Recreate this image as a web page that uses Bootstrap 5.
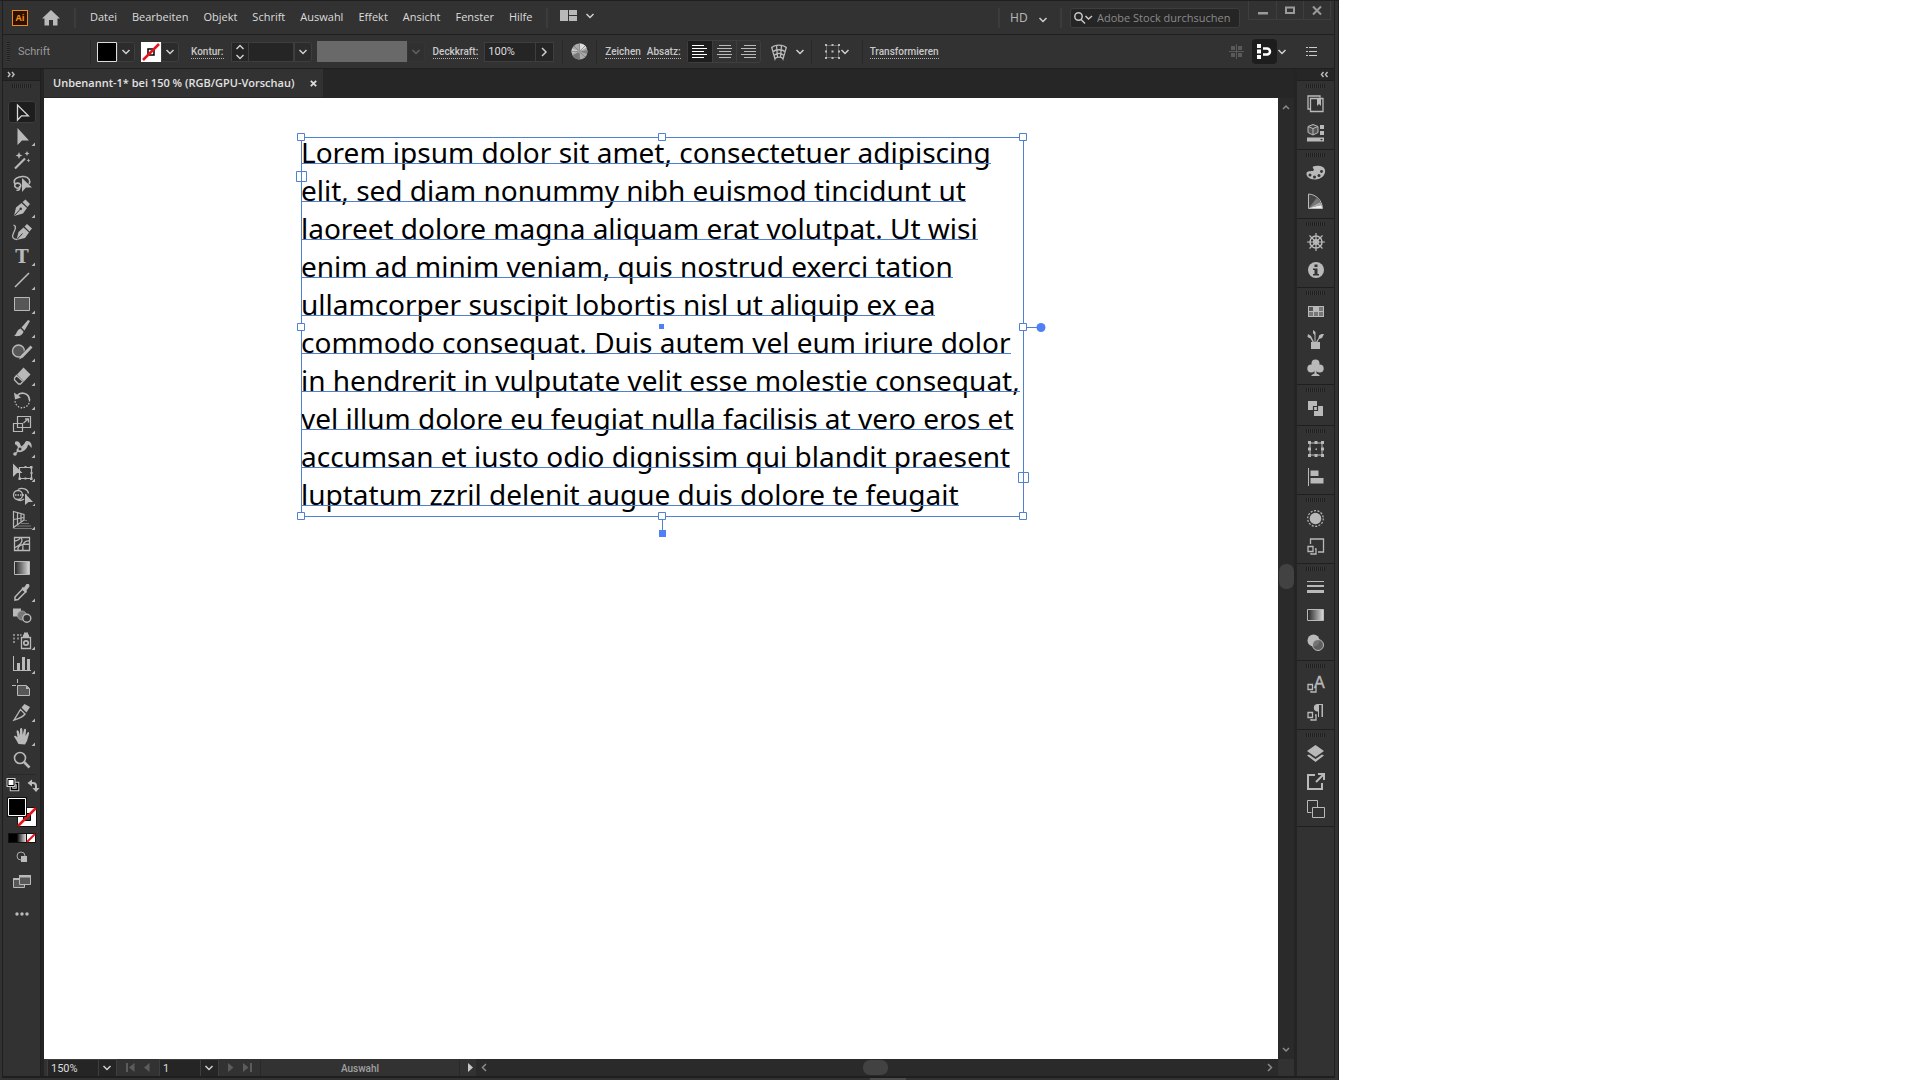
<!DOCTYPE html>
<html lang="de">
<head>
<meta charset="utf-8">
<meta name="viewport" content="width=device-width, initial-scale=1">
<title>Unbenannt-1* bei 150 %</title>
<link href="https://cdn.jsdelivr.net/npm/bootstrap@5.3.0/dist/css/bootstrap.min.css" rel="stylesheet">
<script src="https://cdn.jsdelivr.net/npm/bootstrap@5.3.0/dist/js/bootstrap.bundle.min.js" defer></script>
<style>
:root{--panel:#323232;--dark:#262626;--field:#252525;--edge:#1f1f1f;--rim:#3e3e3e;--ink:#b9b9b9;--text:#dcdcdc;--blue:#5080d0;
--chev:url("data:image/svg+xml,%3Csvg xmlns='http://www.w3.org/2000/svg' viewBox='0 0 10 6'%3E%3Cpath d='M1.5 1 5 4.5 8.5 1' fill='none' stroke='%23d0d0d0' stroke-width='1.5'/%3E%3C/svg%3E")}
body{background:#fff;font-family:"Noto Sans","Open Sans",sans-serif;font-size:11px;line-height:16px;color:var(--text)}
button{background:none;border:0;padding:0;color:inherit}
svg{display:block;flex:none;overflow:visible}
.app{width:69.74vw;min-height:100vh;background:var(--panel);border-top:1px solid var(--edge);border-right:1px solid var(--edge)}
.inner{margin:0 3px 0 2px;border:1px solid var(--edge);border-top:0;border-bottom-width:2px}
.taskmark{width:36px;height:2px;background:#4c4c4c;margin-left:65%}
/* menu bar */
.menubar{height:33px;padding-left:9px}
.logo{width:16px;height:16px;border:1px solid #f08a1c;background:#2b1100;color:#f08a1c;font:bold 9px/14px "Open Sans",sans-serif;text-align:center}
.home{margin-left:14px}
.vsep{width:2px;height:20px;background:#3c3c3c;flex:none}
.menus{gap:15px;margin:0 0 2px 14px;font-family:"Open Sans","Noto Sans",sans-serif}
.menus a{color:var(--text);text-decoration:none;font-size:11px;white-space:nowrap}
.hd{color:#b4b4b4;font-size:12px;width:41px;background:transparent var(--chev) no-repeat right 3px top 7px/10px 6px;border:0;appearance:none;padding:0;margin:0 9px 0 10px}
.stock{width:170px;height:20px;background:var(--field);border:1px solid var(--rim);border-radius:3px;padding:0 3px}
.stock input{background:none;border:0;outline:0;color:#999;width:100%;padding:0;font:11px/16px "Open Sans",sans-serif}
.stock input::placeholder{color:#8a8a8a;opacity:1}
.winbtns{border:1px solid var(--rim);border-top:0;height:19px;margin:0 3px 0 8px}
.winbtns button{width:27px;height:18px;display:flex;align-items:center;justify-content:center}
.winbtns button+button{border-left:1px solid var(--rim)}
/* control bar */
.controls{height:35px;border-top:1px solid var(--edge);border-bottom:1px solid var(--edge);font-family:Roboto,sans-serif;font-size:10px}
.grip-v{width:3px;height:20px;background:repeating-linear-gradient(#1f1f1f 0 1px,#3a3a3a 1px 2px)}
.grip-h{width:19px;height:4px;background:repeating-linear-gradient(90deg,#1f1f1f 0 1px,#3a3a3a 1px 2px)}
.csep{width:1px;height:24px;background:#292929;flex:none}
.ctx{width:72px;color:#999;font-size:11px}
.lbl{font-weight:500;color:#c8c8c8;text-decoration:none;border-bottom:1px dotted #b0b0b0;line-height:13px;white-space:nowrap}
.swbtn{width:20px;height:20px;margin-left:6px}
.drop{width:18px;height:20px;border:1px solid var(--rim);background:#2c2c2c var(--chev) no-repeat center/10px 6px;border-radius:0 3px 3px 0}
.drop.off{opacity:.3}
.profile{width:90px;height:21px;background:#696969;margin-left:5px}
.fld{height:20px;background:var(--field);border:1px solid var(--rim);color:var(--text);outline:0;padding:0 3px;font:11px/16px Roboto,sans-serif;border-radius:0}
.aligns{border:1px solid var(--rim);border-radius:3px;height:23px}
.aligns button{width:24px;height:21px;display:flex;align-items:center;justify-content:center}
.aligns button+button{border-left:1px solid var(--rim)}
.on{background:#1d1d1d}
.snap{width:25px;height:25px}
.chevbtn{width:10px;height:14px;background:var(--chev) no-repeat center/10px 6px}
/* work area */
.dockhead{height:12px;background:var(--dark);border-bottom:1px solid var(--edge)}
.tools{width:38px;border-right:1px solid var(--edge);flex:none}
.gutter{width:3px;background:#242424;flex:none}
.tool{width:28px;height:24px;flex:none}
.tool.sel{background:#1d1d1d;box-shadow:inset 0 0 0 1px #3d3d3d;border-radius:3px;height:22px;margin:1px 0}
.tool.sel svg{margin-top:-1px}
.tabs{height:29px;background:var(--dark)}
.doctab{height:28px;width:279px;background:var(--panel);padding:0 6px 0 9px;color:#e2e2e2;font:600 11px/28px "Open Sans","Noto Sans",sans-serif;white-space:nowrap}
.canvas{background:#fff}
.sb{width:16px;background:#2a2a2a;flex:none}
.thumb{background:#424242;border-radius:7px}
.thumb-v{width:15px;height:25px;margin-bottom:5px}
.thumb-h{width:25px;height:15px;margin-right:3px}
.status{height:17px;background:var(--panel)}
.status select{appearance:none;height:17px;border:1px solid var(--rim);border-bottom:0;padding:0 3px;color:var(--text);font:11px/17px Roboto,sans-serif;
background:var(--chev) no-repeat right 4px center/10px 6px,linear-gradient(var(--rim),var(--rim)) no-repeat right 17px top/1px 100%,var(--field)}
.status>button{margin-left:9px}
.zoomsel{width:70px;margin-left:3px}
.pagesel{width:60px;margin-left:9px}
.toolname{width:200px;margin-left:8px;border:solid #292929;border-width:0 1px;color:#a0a0a0;font:500 10px/19px Roboto,sans-serif}
.hbar{background:#2a2a2a;margin-left:2px}
.dock{width:37px;background:var(--panel);flex:none}
.pgroup{border-bottom:1px solid var(--edge);padding:3px 0 3px}
.pgroup .grip-h{margin-bottom:2px}
.pgroup button{width:28px;height:28px;display:flex;align-items:center;justify-content:center}
/* text frame on the artboard */
.tframe{position:absolute;left:257px;top:39px;width:722px;height:380px;color:#000;font-family:"Noto Sans",sans-serif;font-size:28px;line-height:38px}
.ln{display:block;width:fit-content;height:38px;position:relative;white-space:nowrap;top:-4px}
.ln::after{content:"";position:absolute;left:0;right:0;bottom:7px;height:1px;background:var(--blue)}
.tframe svg{position:absolute;left:0;top:0}
</style>
</head>
<body>
<div class="app d-flex flex-column">
<div class="inner d-flex flex-column flex-grow-1">

<header class="menubar d-flex align-items-center">
  <div class="logo">Ai</div>
  <button class="home" aria-label="Startseite"><svg width="18" height="16" viewBox="0 0 18 16"><path d="M9 0 18 8.500H15.500V15.500H11V10H7V15.500H2.500V8.500H0Z" fill="#b9b9b9"/></svg></button>
  <span class="vsep home"></span>
  <nav class="menus d-flex">
    <a href="#">Datei</a><a href="#">Bearbeiten</a><a href="#">Objekt</a><a href="#">Schrift</a><a href="#">Auswahl</a><a href="#">Effekt</a><a href="#">Ansicht</a><a href="#">Fenster</a><a href="#">Hilfe</a>
  </nav>
  <span class="vsep home me-2"></span>
  <button class="d-flex align-items-center gap-2 ps-1 mb-1" aria-label="Arbeitsbereich"><svg width="17" height="11" viewBox="0 0 17 11" fill="#b9b9b9"><path d="M0 0h8v11H0zM9 0h8v5H9zM9 6h8v5H9z"/></svg><span class="chevbtn"></span></button>
  <div class="ms-auto d-flex align-items-center align-self-stretch">
    <span class="vsep"></span>
    <select class="hd" aria-label="Dokumenttyp"><option>HD</option></select>
    <span class="vsep me-2"></span>
    <label class="stock d-flex align-items-center"><svg class="me-1" width="19" height="12" viewBox="0 0 19 12" fill="none" stroke="#c8c8c8" stroke-width="1.500"><circle cx="4.500" cy="4.500" r="3.700"/><path d="M7 7.500 11 11.500M11.500 4 14.500 7 18 4"/></svg><input type="text" placeholder="Adobe Stock durchsuchen" aria-label="Adobe Stock durchsuchen"></label>
    <div class="winbtns d-flex align-self-start">
      <button aria-label="Minimieren"><svg width="10" height="10"><path d="M0 7h10v2.500H0z" fill="#9a9a9a"/></svg></button><button aria-label="Maximieren"><svg width="10" height="8"><path d="M1 1.500h8v5.500H1z" fill="none" stroke="#9a9a9a" stroke-width="2"/></svg></button><button aria-label="Schließen"><svg width="10" height="9"><path d="M1 .5 9 8.500M9 .5 1 8.500" stroke="#9a9a9a" stroke-width="2"/></svg></button>
    </div>
  </div>
</header>

<div class="controls d-flex align-items-center">
  <span class="grip-v ms-1"></span>
  <span class="ctx ms-2">Schrift</span>
  <span class="csep"></span>
  <button class="swbtn" aria-label="Fläche"><svg width="20" height="20"><path d="M.5.500h19v19H.5z" fill="#000" stroke="#ddd"/></svg></button><button class="drop" aria-label="Flächenfarbe"></button>
  <button class="swbtn" aria-label="Kontur"><svg width="20" height="20"><path d="M0 0h20v20H0z" fill="#fff"/><path d="M7 7h6v6H7z" fill="none" stroke="#000" stroke-width="1.500"/><path d="M2 18 18 2" stroke="#e3141c" stroke-width="2.500"/></svg></button><button class="drop" aria-label="Konturfarbe"></button>
  <a class="lbl" href="#" style="margin:0 7px 0 12px">Kontur:</a>
  <button class="fld" style="width:18px" aria-label="Stärke"><svg width="10" height="16" fill="none" stroke="#ccc" stroke-width="1.500"><path d="M1.500 5 5 1.500 8.500 5M1.500 11 5 14.500 8.500 11"/></svg></button><input class="fld border-start-0" style="width:45px" aria-label="Konturstärke"><button class="drop" aria-label="Stärke wählen"></button>
  <span class="profile"></span><button class="drop off" aria-label="Profil" disabled></button>
  <a class="lbl" href="#" style="margin:0 6px 0 8px">Deckkraft:</a>
  <input class="fld" style="width:52px" value="100%" aria-label="Deckkraft"><button class="fld border-start-0" style="width:18px" aria-label="Deckkraft ändern"><svg width="10" height="10" fill="none" stroke="#ccc" stroke-width="1.500"><path d="M3 1 7 5 3 9"/></svg></button>
  <span class="csep ms-2 me-2"></span>
  <button aria-label="Bildmaterial neu färben"><svg width="17" height="17" viewBox="0 0 17 17"><circle cx="8.500" cy="8.500" r="8" fill="#aaa"/><path d="M8.500 8.500V.5A8 8 0 0 1 15.500 4.500Z" fill="#ddd"/><path d="M8.500 8.500 1.500 12.500A8 8 0 0 0 8.500 16.500Z" fill="#777"/><path d="M8.500 8.500 1 5.500A8 8 0 0 0 .8 10Z" fill="#ccc"/><path d="M8.500 8.500 16 11A8 8 0 0 0 16.500 7Z" fill="#888"/><path d="M8.500.5v16M.5 8.500h16M3 3l11 11M14 3 3 14" stroke="#777" stroke-width=".7"/><circle cx="8.500" cy="8.500" r="2" fill="#999"/></svg></button>
  <span class="csep ms-2 me-2"></span>
  <a class="lbl" href="#">Zeichen</a><a class="lbl" href="#" style="margin:0 6px">Absatz:</a>
  <div class="aligns d-flex">
    <button class="on" aria-label="Linksbündig"><svg width="15" height="14" stroke="#fff"><path d="M0 .5h12M0 3.500h15M0 6.500h12M0 9.500h15M0 12.500h12"/></svg></button><button aria-label="Zentriert"><svg width="15" height="14" stroke="#bbb"><path d="M2 .5h12M0 3.500h15M2 6.500h12M0 9.500h15M2 12.500h12"/></svg></button><button aria-label="Rechtsbündig"><svg width="15" height="14" stroke="#bbb"><path d="M3 .5h12M0 3.500h15M3 6.500h12M0 9.500h15M3 12.500h12"/></svg></button>
  </div>
  <button class="d-flex align-items-center gap-2" style="margin-left:10px" aria-label="Verzerrungshülle"><svg width="16" height="16" viewBox="0 0 16 16" fill="none" stroke="#bbb" stroke-width="1.300"><path d="M.7 3.500C4 .2 12 .2 15.300 3.500L12 15C11 12.500 5 12.500 4 15ZM1.500 8C5 5 11 5 14.500 8M3 11.500C6 9 10 9 13 11.500M5.500 1.500 6.500 13M10.500 1.500 9.500 13"/></svg><span class="chevbtn"></span></button>
  <span class="csep" style="margin:0 13px 0 6px"></span>
  <button class="d-flex align-items-center" aria-label="Ausrichten"><svg width="15" height="15" fill="#bbb"><path d="M1.500 1.500h12v12h-12z" fill="none" stroke="#999" stroke-dasharray="1 1"/><path d="M0 0h2v2H0zM6.500 0h2v2h-2zM13 0h2v2h-2zM0 6.500h2v2H0zM13 6.500h2v2h-2zM0 13h2v2H0zM6.500 13h2v2h-2zM13 13h2v2h-2zM6.500 6.500h2v2h-2z"/></svg><span class="chevbtn"></span></button>
  <span class="csep" style="margin:0 7px 0 12px"></span>
  <a class="lbl" href="#">Transformieren</a>
  <div class="ms-auto d-flex align-items-center">
    <button aria-label="Am Pixelraster ausrichten"><svg width="15" height="16" fill="#5a5a5a"><path d="M2 2h4v4H2zM9 2h4v4H9zM2 9h4v4H2zM9 9h4v4H9zM7 0h1v15H7zM0 7h15v1H0z"/></svg></button>
    <button class="on snap rounded-1 d-flex align-items-center justify-content-center ms-2" aria-label="An Pixel ausrichten"><svg width="15" height="15" fill="#fff"><path d="M0 0h4v4H0zM0 5.500h4v4H0zM0 11h4v4H0z"/><path d="M6 4.500h4a3 3 0 0 1 0 6H6" fill="none" stroke="#fff" stroke-width="2.500"/></svg></button>
    <span class="chevbtn"></span>
    <button style="margin:0 17px 0 19px" aria-label="Menü"><svg width="11" height="9" fill="#ccc"><path d="M0 0h2v1H0zM3 0h8v1H3zM0 4h2v1H0zM3 4h8v1H3zM0 8h2v1H0zM3 8h8v1H3z"/></svg></button>
  </div>
</div>

<main class="d-flex flex-grow-1">
  <!-- tool bar -->
  <aside class="tools d-flex flex-column align-items-center">
    <div class="dockhead w-100"><svg width="18" height="11"><path d="M5 3l2 2.500L5 8M9 3l2 2.500L9 8" fill="none" stroke="#bbb" stroke-width="1.500"/></svg></div>
    <span class="grip-h" style="margin:3px 0 12px"></span>
    <button class="tool sel" aria-label="Auswahl"><svg width="28" height="24" fill="none" stroke="#d8d8d8" stroke-width="1.300"><path d="M9.500 5V20L13.500 15.800H20.300Z"/></svg></button>
    <button class="tool" aria-label="Direktauswahl"><svg width="28" height="24" fill="#b9b9b9"><path d="M9.500 4V21L14 16.500H21ZM27 18.500V22H23.500Z"/></svg></button>
    <button class="tool" aria-label="Zauberstab"><svg width="28" height="24" fill="#b9b9b9"><path d="M7 20.500 17 10.500" stroke="#b9b9b9" stroke-width="2.200"/><path d="M11 4l1 2.500 2.500 1L12 8.500 11 11 10 8.500 7.500 7.500 10 6.500ZM19 3l.8 1.700 1.700.8-1.700.8L19 8l-.8-1.700-1.700-.8 1.700-.8ZM20.500 10.500l.6 1.400 1.400.6-1.400.6-.6 1.400-.6-1.400-1.400-.6 1.400-.6Z"/></svg></button>
    <button class="tool" aria-label="Lasso"><svg width="28" height="24"><path d="M7 12C4 7 11 4 16 4.500 21 5 23 9 21 12M7 12.500A3 2.500 0 1 0 12 12 3 2.500 0 0 0 7 12.500M11.500 14C12.500 17 11 19 8.500 18" fill="none" stroke="#b9b9b9" stroke-width="1.600"/><path d="M14 6V20L18 15.500H24Z" fill="#b9b9b9"/></svg></button>
    <button class="tool" aria-label="Zeichenstift"><svg width="28" height="24" fill="#b9b9b9"><path d="M6 20 8 11.500 13.500 7 19 12 15 17.500ZM14.500 6 17.500 3.500 22 8 19.500 11ZM27 18.500V22H23.500Z"/><path d="M6.500 19.500 12.500 13" stroke="#323232"/><circle cx="12.800" cy="12.800" r="1.200" fill="#323232"/></svg></button>
    <button class="tool" aria-label="Kurvenzeichner"><svg width="28" height="24" fill="#b9b9b9"><path d="M8.500 20 10.500 12 15.500 7.500 21 12.500 17 18ZM16.500 6.500 19 4 24 8.500 21.500 11.500Z"/><path d="M9 19.500 14.500 13.500" stroke="#323232"/><path d="M5.500 5C9 6 7 10 5.500 13 3.500 17 5 19.500 9 19.500" fill="none" stroke="#b9b9b9" stroke-width="1.300"/></svg></button>
    <button class="tool" aria-label="Text"><svg width="28" height="24" fill="#b9b9b9"><text x="14" y="18.500" text-anchor="middle" font-family="DejaVu Serif,serif" font-weight="bold" font-size="18">T</text><path d="M27 18.500V22H23.500Z"/></svg></button>
    <button class="tool" aria-label="Liniensegment"><svg width="28" height="24" fill="#b9b9b9"><path d="M7 19 21 5" stroke="#b9b9b9" stroke-width="1.600"/><path d="M27 18.500V22H23.500Z"/></svg></button>
    <button class="tool" aria-label="Rechteck"><svg width="28" height="24" fill="#b9b9b9"><path d="M6.500 5.500h15v13h-15z" fill="#575757" stroke="#b9b9b9"/><path d="M27 18.500V22H23.500Z"/></svg></button>
    <button class="tool" aria-label="Pinsel"><svg width="28" height="24" fill="#b9b9b9"><path d="M20 4 22 5 16.500 14.500 13.500 11.500ZM12.500 12.500 15.500 15.500C14.500 20 10 20.500 6 20 9 18 8.500 14 12.500 12.500ZM27 18.500V22H23.500Z"/></svg></button>
    <button class="tool" aria-label="Shaper"><svg width="28" height="24" fill="#b9b9b9"><circle cx="10.500" cy="11" r="6" fill="#575757" stroke="#b9b9b9" stroke-width="1.400"/><path d="M13.500 17.500 23.500 7" stroke="#323232" stroke-width="5"/><path d="M11 19.500 12.500 15.500 22.500 5.500 24.500 7.500 15 17.500ZM27 18.500V22H23.500Z"/></svg></button>
    <button class="tool" aria-label="Radiergummi"><svg width="28" height="24" fill="#b9b9b9"><path d="M9 10.500 15.500 3.500 22.500 10.500 16 17.500Z"/><path d="M8.500 11.500 15 17.500 12.500 20 10.500 20 6.500 16 6.500 14Z" fill="#323232" stroke="#b9b9b9" stroke-width="1.300"/><path d="M27 18.500V22H23.500Z"/></svg></button>
    <button class="tool" aria-label="Drehen"><svg width="28" height="24" fill="#b9b9b9"><path d="M9 8C13 3 21 5 21.500 12" fill="none" stroke="#b9b9b9" stroke-width="1.800"/><path d="M21.500 12A7 7 0 0 1 7 13" fill="none" stroke="#b9b9b9" stroke-width="1.300" stroke-dasharray="1.500 1.500"/><path d="M6 4.500 7 11.500 13 9.500ZM27 18.500V22H23.500Z"/></svg></button>
    <button class="tool" aria-label="Skalieren"><svg width="28" height="24" fill="#b9b9b9"><path d="M9.500 4.500h13v11h-13zM5.500 11.500h9v8h-9z" fill="none" stroke="#b9b9b9" stroke-width="1.200"/><path d="M15.500 11 19.500 7.500M17 7h3.500v3.500" fill="none" stroke="#b9b9b9" stroke-width="1.300"/><path d="M27 18.500V22H23.500Z"/></svg></button>
    <button class="tool" aria-label="Breite"><svg width="28" height="24" fill="#b9b9b9"><path d="M7 6C9 4 12 6 12.500 9L14 11C17 11 16 6 18.500 5 22 4.500 24.500 8 23.500 12 22 11 21.500 8 20 9 19 13 15 17 10 16L8 14C11 13 10 9 7 8.500Z"/><path d="M7 18 19 6" stroke="#b9b9b9" stroke-width="1.300"/><circle cx="7" cy="18" r="1.800"/><circle cx="12" cy="13" r="2" fill="#323232" stroke="#b9b9b9"/><path d="M27 18.500V22H23.500Z"/></svg></button>
    <button class="tool" aria-label="Frei transformieren"><svg width="28" height="24" fill="#b9b9b9"><path d="M11.500 7.500h12v11h-12z" fill="none" stroke="#b9b9b9" stroke-width="1.200"/><path d="M5 3.500V17L9 13H14.500ZM10.500 17.500h2.500v2.500h-2.500zM22 6h2.500v2.500H22zM22 17.500h2.500v2.500H22zM16.500 6h2v2h-2zM16.500 17.500h2v2h-2zM22.500 12h2v2h-2zM27 18.500V22H23.500Z"/></svg></button>
    <button class="tool" aria-label="Formerstellung"><svg width="28" height="24" fill="#b9b9b9"><g fill="none" stroke="#b9b9b9" stroke-width="1.300"><circle cx="10" cy="11" r="4.500"/><path d="M10 5.500C14 3 20 5 20.500 9.500"/><path d="M7 11h12" stroke-dasharray="1.500 1"/><path d="M9 15.500C12 17.500 14 16.500 16 15"/></g><path d="M17 9.500V21L20.500 18H25ZM27 19.500V22H24.500Z"/></svg></button>
    <button class="tool" aria-label="Perspektivenraster"><svg width="28" height="24" fill="#b9b9b9"><path d="M5.500 3.500V19.500L16 12V6.500ZM9.500 4.500V17M13 5.500V14.500M5.500 11.500 16 9.500" fill="none" stroke="#b9b9b9" stroke-width="1.200"/><path d="M16 12.500h3M13 15.500h8M9 18h14M6 20.500h18" stroke="#777"/><path d="M27 18.500V22H23.500Z"/></svg></button>
    <button class="tool" aria-label="Gitter"><svg width="28" height="24" fill="none" stroke="#b9b9b9" stroke-width="1.300"><path d="M6.500 5.500h15v13h-15zM6.500 9C10 9 12 7 12 5.500M6.500 16C11 14 16 10 13 5.500M10 18.500C9 13 15 12 21.500 12M15 18.500C14 11 17 8 21.500 9"/></svg></button>
    <button class="tool" aria-label="Verlauf"><svg width="28" height="24"><defs><linearGradient id="g"><stop stop-color="#222"/><stop offset="1" stop-color="#ddd"/></linearGradient></defs><path d="M6.500 5.500h15v13h-15z" fill="url(#g)" stroke="#b9b9b9"/></svg></button>
    <button class="tool" aria-label="Pipette"><svg width="28" height="24" fill="#b9b9b9"><path d="M7 20 7 17 14.500 9 17.500 12 10 19.500Z" fill="none" stroke="#b9b9b9" stroke-width="1.500"/><path d="M13.500 8 15 7 16 7.500 18.500 4 21 4 21.500 6.500 18.500 10.500 19 12 17.500 13ZM27 18.500V22H23.500Z"/></svg></button>
    <button class="tool" aria-label="Angleichen"><svg width="28" height="24"><path d="M5 4.500h8v8H5z" fill="#b9b9b9"/><circle cx="14" cy="11.500" r="4.500" fill="#777" stroke="#999"/><circle cx="18.800" cy="14.200" r="4" fill="#323232" stroke="#b9b9b9" stroke-width="1.400"/></svg></button>
    <button class="tool" aria-label="Symbol aufsprühen"><svg width="28" height="24" fill="#b9b9b9"><path d="M13.500 9.500h9v11h-9z" fill="none" stroke="#b9b9b9" stroke-width="1.300"/><circle cx="18" cy="15" r="2.200" fill="none" stroke="#b9b9b9" stroke-width="1.700"/><path d="M15 6.500h1V4.500h4v2h1V9h-6zM27 18.500V22H23.500Z"/><path d="M5 6h2v2H5zM9 6h2v2H9zM12 6h1.500v2H12zM5 9.500h2v2H5zM9 9.500h2v2H9zM5 13h2v2H5z" fill="#888"/></svg></button>
    <button class="tool" aria-label="Diagramm"><svg width="28" height="24" fill="#b9b9b9"><path d="M5 4h1v14h17v1H5zM9 11h3v7H9zM14 5h3v13h-3zM19 7h3v11h-3zM27 18.500V22H23.500Z"/></svg></button>
    <button class="tool" aria-label="Zeichenfläche"><svg width="28" height="24"><path d="M9.500 9.500h9l3 3v7h-12z" fill="#575757" stroke="#b9b9b9"/><path d="M18 9.500v3.500h3.500z" fill="#b9b9b9"/><path d="M9.500 3v4M4 9.500h4" stroke="#b9b9b9"/></svg></button>
    <button class="tool" aria-label="Slice"><svg width="28" height="24" fill="#b9b9b9"><path d="M6 20 12.500 9.500 17 14C14 18 9 19 6 20Z" fill="none" stroke="#b9b9b9" stroke-width="1.400"/><path d="M13.500 7.500 16.500 4 22 7 18.500 12.500ZM27 18.500V22H23.500Z"/></svg></button>
    <button class="tool" aria-label="Hand"><svg width="28" height="24" fill="#b9b9b9"><path d="M10.500 20C9 17 7.500 14.500 6 12.500 6.500 11 8 11.500 9.500 13.500L8.500 7C9.500 5.500 10.500 6.500 11 8L12 11.500 12 5C13 3.500 14.200 4 14.300 5.500L14.700 11 16 5.500C17 4.200 18.200 5 18 6.500L17.500 12 19.500 8.500C20.500 7.500 21.500 8.500 21 10L19 17 17 20.500ZM27 18.500V22H23.500Z"/></svg></button>
    <button class="tool" aria-label="Zoom"><svg width="28" height="24" fill="none" stroke="#b9b9b9"><circle cx="12" cy="10" r="5.500" stroke-width="1.600"/><path d="M16 14 21.500 19.500" stroke-width="2.600"/></svg></button>
    <svg width="38" height="150" viewBox="3 772 38 150" role="img" aria-label="Fläche und Kontur">
      <path d="M8 774.500h28" stroke="#292929"/>
      <path d="M11.500 783.500h6v6h-6z" fill="none" stroke="#ccc" stroke-width="3.500"/><path d="M11.500 783.500h6v6h-6z" fill="none" stroke="#000" stroke-width="1.500"/><path d="M8 779.500h6v6H8z" fill="#fff" stroke="#ccc" stroke-width="3"/><path d="M8 779.500h6v6H8z" fill="#fff" stroke="#000"/>
      <path d="M30 783h3q3 0 3 3v3" fill="none" stroke="#bbb" stroke-width="2"/><path d="M27.500 783 32 779.500V786.500ZM32.500 788h7L36 792Z" fill="#bbb"/>
      <path d="M17.500 807.500h19v19h-19z" fill="#fff" stroke="#111"/><path d="M23.500 813.500h7v7h-7z" fill="#444" stroke="#000"/><path d="M18 826 36 808" stroke="#e3141c" stroke-width="2.500"/>
      <path d="M7.500 797.500h19v19h-19z" fill="#000" stroke="#111"/><path d="M8.500 798.500h17v17h-17z" fill="#000" stroke="#fff"/>
      <path d="M8 833h28v10H8z" fill="#111"/><path d="M9 834h8v8H9z" fill="#000"/><path d="M18 834h8v8h-8z" fill="url(#g)"/><path d="M27 834h8v8h-8z" fill="#fff"/><path d="M27 842 35 834" stroke="#e3141c" stroke-width="2"/>
      <circle cx="21" cy="856" r="4" fill="none" stroke="#aaa"/><path d="M21 856h6v6h-6z" fill="#bbb"/>
      <path d="M13.500 878.500h11v9h-11z" fill="#575757" stroke="#b9b9b9"/><path d="M19.500 875.500h11v9h-11z" fill="#575757" stroke="#b9b9b9"/><path d="M13 878h6v2h-6zM19 875h12v2.500H19z" fill="#b9b9b9"/>
      <g fill="#bbb"><circle cx="17" cy="914" r="1.700"/><circle cx="22" cy="914" r="1.700"/><circle cx="27" cy="914" r="1.700"/></g>
    </svg>
  </aside>
  <span class="gutter"></span>

  <!-- document window -->
  <section class="d-flex flex-column flex-grow-1">
    <div class="tabs"><div class="doctab d-flex justify-content-between align-items-center"><span>Unbenannt-1* bei 150 % (RGB/GPU-Vorschau)</span><button aria-label="Schließen"><svg width="7" height="7"><path d="M.8.800 6.200 6.200M6.200.800.800 6.200" stroke="#ddd" stroke-width="1.800"/></svg></button></div></div>
    <div class="d-flex flex-grow-1">
      <div class="canvas flex-grow-1 position-relative">
        <div class="tframe">
          <span class="ln">Lorem ipsum dolor sit amet, consectetuer adipiscing</span>
          <span class="ln">elit, sed diam nonummy nibh euismod tincidunt ut</span>
          <span class="ln">laoreet dolore magna aliquam erat volutpat. Ut wisi</span>
          <span class="ln">enim ad minim veniam, quis nostrud exerci tation</span>
          <span class="ln">ullamcorper suscipit lobortis nisl ut aliquip ex ea</span>
          <span class="ln">commodo consequat. Duis autem vel eum iriure dolor</span>
          <span class="ln">in hendrerit in vulputate velit esse molestie consequat,</span>
          <span class="ln">vel illum dolore eu feugiat nulla facilisis at vero eros et</span>
          <span class="ln">accumsan et iusto odio dignissim qui blandit praesent</span>
          <span class="ln">luptatum zzril delenit augue duis dolore te feugait</span>
          <svg width="723" height="380" fill="#fff" stroke="#5080d0">
            <path d="M.5.500h722v379H.5zM722 190.500h16M361.500 380v14" fill="none"/>
            <path d="M-3.500-3.500h7v7h-7zM357.500-3.500h7v7h-7zM718.500-3.500h7v7h-7zM-3.500 186.500h7v7h-7zM718.500 186.500h7v7h-7zM-3.500 375.500h7v7h-7zM357.500 375.500h7v7h-7zM718.500 375.500h7v7h-7z"/>
            <path d="M-4.500 34.500h10v10h-10zM717.500 335.500h10v10h-10z"/><path d="M.5 34v10M722.500 336v10"/>
            <g fill="#4f80f5" stroke="none"><path d="M358 187h5v5h-5zM358 393h7v7h-7z"/><circle cx="740" cy="190.500" r="4.500"/></g>
          </svg>
        </div>
      </div>
      <div class="sb d-flex flex-column align-items-center justify-content-between py-1">
        <svg width="8" height="9" fill="none" stroke="#8a8a8a" stroke-width="1.500"><path d="M1 7 4 4 7 7"/></svg>
        <span class="thumb thumb-v"></span>
        <svg width="8" height="9" fill="none" stroke="#8a8a8a" stroke-width="1.500"><path d="M1 2 4 5 7 2"/></svg>
      </div>
    </div>
    <footer class="status d-flex align-items-center">
      <select class="zoomsel" aria-label="Zoomstufe"><option>150%</option></select>
      <button aria-label="Erste"><svg width="9" height="9" fill="#5c5c5c"><path d="M0 0h2v9H0zM8.500 0v9L3 4.500Z"/></svg></button>
      <button aria-label="Zurück"><svg width="6" height="9" fill="#5c5c5c"><path d="M5.500 0v9L0 4.500Z"/></svg></button>
      <select class="pagesel" aria-label="Zeichenfläche"><option>1</option></select>
      <button aria-label="Weiter"><svg width="6" height="9" fill="#5c5c5c"><path d="M0 0v9L5.500 4.500Z"/></svg></button>
      <button aria-label="Letzte"><svg width="9" height="9" fill="#5c5c5c"><path d="M7 0h2v9H7zM0 0v9L5.500 4.500Z"/></svg></button>
      <span class="toolname text-center h-100">Auswahl</span>
      <button class="ms-2" aria-label="Status"><svg width="6" height="9" fill="#c8c8c8"><path d="M0 0v9L5 4.500Z"/></svg></button>
      <div class="hbar flex-grow-1 h-100 d-flex align-items-center justify-content-between px-1">
        <svg width="8" height="9" fill="none" stroke="#8a8a8a" stroke-width="1.500"><path d="M6 1 2.500 4.500 6 8"/></svg>
        <span class="thumb thumb-h"></span>
        <svg width="8" height="9" fill="none" stroke="#8a8a8a" stroke-width="1.500"><path d="M2 1 5.500 4.500 2 8"/></svg>
      </div>
      <span style="width:16px"></span>
    </footer>
  </section>
  <span class="gutter"></span>

  <!-- collapsed panels -->
  <aside class="dock">
    <div class="dockhead d-flex justify-content-end"><svg width="16" height="11"><path d="M5.500 3l-2 2.500 2 2.500M9.500 3l-2 2.500 2 2.500" fill="none" stroke="#bbb" stroke-width="1.500"/></svg></div>
    <div class="pgroup d-flex flex-column align-items-center"><span class="grip-h"></span>
      <button aria-label="Bibliotheken"><svg width="18" height="18" fill="none" stroke="#b9b9b9" stroke-width="1.300"><path d="M13 2.500V1H1v13h2M3.500 3.500h12.500v13H3.500z"/><path d="M10 3h4v8l-2-2-2 2z" fill="#b9b9b9" stroke="none"/></svg></button>
      <button aria-label="Eigenschaften"><svg width="18" height="18" fill="#b9b9b9"><path d="M1 3.500 6 1.500 11 3.500V9.500L6 12 1 9.500ZM1 3.500 6 5.500 11 3.500M6 5.500V12" fill="#555" stroke="#b9b9b9"/><path d="M13 2h4v4h-4zM13 8h4v4h-4zM0 14.500h17v4H0z"/><path d="M13 16h3l-1.500 1.500z" fill="#323232"/></svg></button></div>
    <div class="pgroup d-flex flex-column align-items-center"><span class="grip-h"></span>
      <button aria-label="Farbe"><svg width="20" height="16" fill="#b9b9b9"><path d="M7 1.500C11 0 18 .500 19 5 20 10 15 14.500 9 14.500 3 14.500 0 11 .5 8 2 5 7 7 8 5 8 4 6 3 7 1.500Z"/><g fill="#323232"><circle cx="4" cy="10" r="1.500"/><circle cx="8.500" cy="12" r="1.500"/><circle cx="13" cy="10.500" r="1.500"/><circle cx="15.500" cy="6.500" r="1.400"/></g></svg></button>
      <button aria-label="Farbhilfe"><svg width="17" height="17"><path d="M1.500 15.500V1C9 1.500 15 7 15.500 15.500Z" fill="#444" stroke="#b9b9b9"/><path d="M2 15 9.500 5A14 14 0 0 1 13 9Z" fill="#777"/><path d="M2 15 13 9A13 13 0 0 1 14.500 12Z" fill="#aaa"/><path d="M2 15 14.500 12 15 15Z" fill="#eee"/></svg></button></div>
    <div class="pgroup d-flex flex-column align-items-center"><span class="grip-h"></span>
      <button aria-label="Navigator"><svg width="18" height="18" fill="none" stroke="#b9b9b9"><circle cx="9" cy="9" r="6" stroke-width="1.500"/><circle cx="9" cy="9" r="2.300" stroke-width="1.500"/><path d="M9 0v18M0 9h18M2.500 2.500l13 13M15.500 2.500l-13 13" stroke-width="1.200"/></svg></button>
      <button aria-label="Info"><svg width="16" height="16"><circle cx="8" cy="8" r="8" fill="#b9b9b9"/><path d="M6.500 2.500h3v2.500h-3zM5 6.500h4.500V12H11v1.500H5V12h1.500V8H5z" fill="#323232"/></svg></button></div>
    <div class="pgroup d-flex flex-column align-items-center"><span class="grip-h"></span>
      <button aria-label="Farbfelder"><svg width="16" height="11"><path d="M0 0h16v11H0z" fill="#b9b9b9"/><path d="M1 1h4v4H1z" fill="#555"/><path d="M11 1h4v4h-4zM1 6h4v4H1zM6 6h4v4H6zM11 6h4v4h-4z" fill="#777"/></svg></button>
      <button aria-label="Pinsel"><svg width="17" height="19" fill="#b9b9b9"><path d="M4 12h9v7H4zM1 4 4 6 5.500 9 7 12H5.500L3.500 8.500.5 7ZM6 0l2.500 2V5L8.500 12h-1V5L6 3ZM17 4l-2 4-3 1-1.500 3H9L11.500 8 12 5.500 14.500 4Z"/></svg></button>
      <button aria-label="Symbole"><svg width="17" height="17" fill="#b9b9b9"><circle cx="8.500" cy="4.500" r="4"/><circle cx="4.300" cy="9.500" r="4"/><circle cx="12.700" cy="9.500" r="4"/><path d="M7.500 8h2v6.500l3 1.500v1h-8v-1l3-1.500z"/></svg></button></div>
    <div class="pgroup d-flex flex-column align-items-center"><span class="grip-h"></span>
      <button aria-label="Pathfinder"><svg width="15" height="15"><path d="M0 0h9v5h6v10H6V9H0z" fill="#b9b9b9"/><path d="M5.500 5.500h4v4h-4z" fill="#b9b9b9" stroke="#323232" stroke-width="1.200"/></svg></button></div>
    <div class="pgroup d-flex flex-column align-items-center"><span class="grip-h"></span>
      <button aria-label="Transformieren"><svg width="16" height="16" fill="#b9b9b9"><path d="M2 2h12v12H2z" fill="none" stroke="#b9b9b9"/><path d="M0 0h3v3H0zM6.500 0h3v3h-3zM13 0h3v3h-3zM0 6.500h3v3H0zM13 6.500h3v3h-3zM0 13h3v3H0zM6.500 13h3v3h-3zM13 13h3v3h-3zM7.500 7.500h1.500v1.500H7.500z"/></svg></button>
      <button aria-label="Ausrichten"><svg width="16" height="18" fill="#b9b9b9"><path d="M0 0h1v18H0zM2.500 2.500h8v5.500h-8zM2.500 10h13v5.500h-13z"/></svg></button></div>
    <div class="pgroup d-flex flex-column align-items-center"><span class="grip-h"></span>
      <button aria-label="Aussehen"><svg width="17" height="17"><circle cx="8.500" cy="8.500" r="5.800" fill="#b9b9b9"/><circle cx="8.500" cy="8.500" r="7.800" fill="none" stroke="#b9b9b9" stroke-width="1.200" stroke-dasharray="2 1.500"/></svg></button>
      <button aria-label="Grafikstile"><svg width="17" height="17" fill="none" stroke="#b9b9b9" stroke-width="1.300"><path d="M3.500 6V1h13v13H11M1 8.500h5v5H1zM8 11h1v5H4v-1"/></svg></button></div>
    <div class="pgroup d-flex flex-column align-items-center"><span class="grip-h"></span>
      <button aria-label="Kontur"><svg width="17" height="12" fill="#b9b9b9"><path d="M0 0h17v1H0zM0 4h17v2H0zM0 9h17v3H0z"/></svg></button>
      <button aria-label="Verlauf"><svg width="17" height="12"><path d="M.5.500h16v11H.5z" fill="url(#g)" stroke="#b9b9b9"/></svg></button>
      <button aria-label="Transparenz"><svg width="18" height="18"><circle cx="6.500" cy="6.500" r="6" fill="#b9b9b9"/><circle cx="11" cy="11" r="5.500" fill="#666" fill-opacity=".85" stroke="#b9b9b9"/></svg></button></div>
    <div class="pgroup d-flex flex-column align-items-center"><span class="grip-h"></span>
      <button aria-label="Zeichenformate"><svg width="18" height="18"><path d="M1 9.500h4.500v5H1zM8 12h1v5H4v-1" fill="none" stroke="#b9b9b9" stroke-width="1.300"/><text x="7" y="13" font-family="Liberation Sans,sans-serif" font-size="16" fill="#b9b9b9" stroke="#b9b9b9" stroke-width=".4">A</text></svg></button>
      <button aria-label="Absatzformate"><svg width="18" height="18"><path d="M1 9.500h4.500v5H1zM8 12h1v5H4v-1" fill="none" stroke="#b9b9b9" stroke-width="1.300"/><path d="M16 1h-6a3.800 3.800 0 0 0 0 7.500h1V14h1V2h2.500v12H16z" fill="#b9b9b9"/></svg></button></div>
    <div class="pgroup d-flex flex-column align-items-center"><span class="grip-h"></span>
      <button aria-label="Ebenen"><svg width="17" height="17" fill="#b9b9b9"><path d="M8.500 0 17 6 8.500 12 0 6ZM0 10.500 2 9.500 8.500 14 15 9.500 17 10.500 8.500 17Z"/></svg></button>
      <button aria-label="Exportieren"><svg width="18" height="17" fill="none" stroke="#b9b9b9" stroke-width="2"><path d="M8 2H1v14h14V10M9 9 16 2M11 1h6v6"/></svg></button>
      <button aria-label="Zeichenflächen"><svg width="18" height="18" fill="none" stroke="#b9b9b9"><path d="M4.500 12.500h-4v-12h10v7M5.500 7.500h12v10h-12z"/></svg></button></div>
  </aside>
</main>
</div>
<div class="taskmark"></div>
</div>
</body>
</html>
